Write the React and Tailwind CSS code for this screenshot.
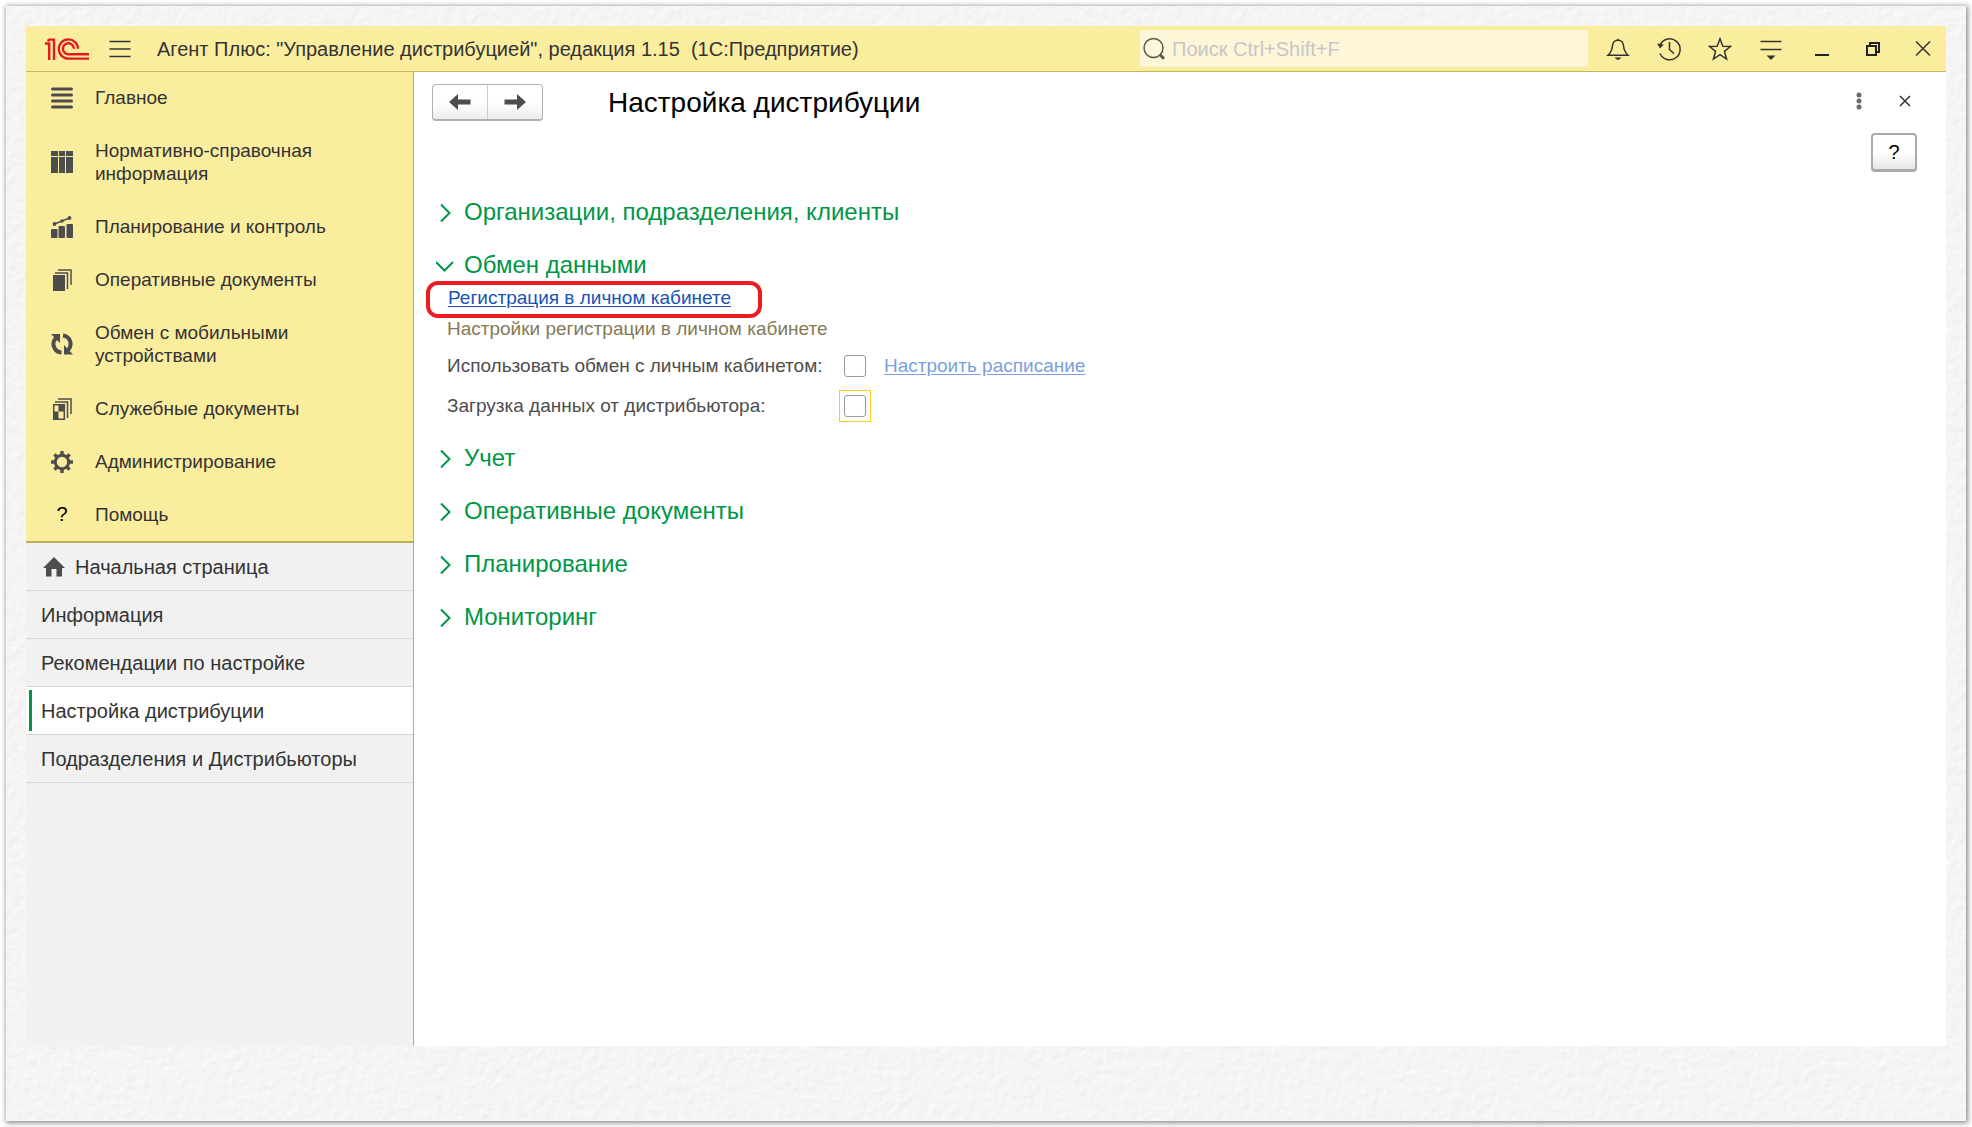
import React from "react";

const line = { fill: "none", stroke: "#333333", strokeWidth: 1.5 };

function Logo() {
  return (
    <svg viewBox="0 0 44 22" className="h-[22px] w-[44px] shrink-0" fill="none" stroke="#e01b22" strokeWidth="2.4" role="img" aria-label="1С">
      <path d="M0 5.5H4.2V22M3.2 1.6H9V22M2.6 3.2L4.4 1.4" />
      <path d="M33 10.8A9.6 9.6 0 1 0 23.4 20.6H44" />
      <path d="M28.9 10.8A5.5 5.5 0 1 0 23.4 16.3H44" />
    </svg>
  );
}

function Burger() {
  return (
    <svg viewBox="0 0 22 18" className="h-[18px] w-[22px]" {...line}>
      <path d="M.5 1.5H21.5M.5 9H21.5M.5 16.5H21.5" />
    </svg>
  );
}

function SearchIcon() {
  return (
    <svg viewBox="0 0 24 24" className="size-6 shrink-0" fill="none" stroke="#5c584a">
      <circle cx="10.5" cy="11" r="9.5" strokeWidth="1.5" />
      <path d="M17 17.800L21 21.800" strokeWidth="3" />
    </svg>
  );
}

const windowIcons = [
  {
    label: "Уведомления",
    art: (
      <svg viewBox="0 0 24 24" className="size-6" {...line}>
        <path d="M2 18.2H22C19.2 15.6 18 13.6 17.6 9.2C17.3 5.4 15.4 3.2 12 3.2C8.600 3.2 6.700 5.4 6.400 9.2C6 13.600 4.800 15.600 2 18.200Z" />
        <path d="M10.500 2.800A1.600 1.600 0 0 1 13.500 2.800ZM8.500 20.500H15.500L13 22.700H11Z" fill="#333" stroke="none" />
      </svg>
    ),
  },
  {
    label: "История",
    art: (
      <svg viewBox="0 0 24 24" className="size-6" {...line}>
        <path d="M3.300 7.500A10.500 10.500 0 1 1 3 16.500M12.500 5V12.500L17 16.800" />
        <path d="M0 6.500L6.800 7.500L3 11.500Z" fill="#333" stroke="none" />
      </svg>
    ),
  },
  {
    label: "Избранное",
    art: (
      <svg viewBox="0 0 24 24" className="size-6" {...line}>
        <path d="M12 1.800L14.800 9.300L22.500 9.500L16.400 14.300L18.600 22L12 17.600L5.400 22L7.600 14.300L1.500 9.500L9.200 9.300Z" />
      </svg>
    ),
  },
  {
    label: "Сервис и настройки",
    art: (
      <svg viewBox="0 0 24 24" className="size-6" {...line}>
        <path d="M1.500 4.500H22.500M1.500 12.500H22.500" />
        <path d="M7.500 18.500H16.500L12 23Z" fill="#333" stroke="none" />
      </svg>
    ),
  },
  {
    label: "Свернуть",
    art: (
      <svg viewBox="0 0 24 24" className="size-6">
        <path d="M5 17H19V19H5Z" fill="#222" />
      </svg>
    ),
  },
  {
    label: "Развернуть",
    art: (
      <svg viewBox="0 0 24 24" className="size-6" fill="none" stroke="#222" strokeWidth="2">
        <path d="M6 9H15V18H6ZM9 9V6H18V15H15" />
      </svg>
    ),
  },
  {
    label: "Закрыть приложение",
    art: (
      <svg viewBox="0 0 24 24" className="size-6" {...line}>
        <path d="M6 4.500L20 18.500M20 4.500L6 18.500" />
      </svg>
    ),
  },
];

const glyph = "size-[22px]";
const menu = [
  {
    label: "Главное",
    art: (
      <svg viewBox="0 0 22 22" className={glyph}>
        <path d="M1.500 2H20.500M1.500 8H20.500M1.500 14H20.500M1.500 20H20.500" stroke="#4d4d4d" strokeWidth="3" strokeLinecap="round" />
      </svg>
    ),
  },
  {
    label: "Нормативно-справочная информация",
    art: (
      <svg viewBox="0 0 22 22" className={glyph} fill="#4d4d4d">
        <path d="M0 0H7V5H0ZM8 0H14V5H8ZM15 0H22V5H15ZM0 6H7V22H0ZM8 6H14V22H8ZM15 6H22V22H15Z" />
      </svg>
    ),
  },
  {
    label: "Планирование и контроль",
    art: (
      <svg viewBox="0 0 22 22" className={glyph} fill="#4d4d4d">
        <rect x="0" y="13" width="6.500" height="9" rx="1" />
        <rect x="7.500" y="10" width="6.500" height="12" rx="1" />
        <rect x="15.500" y="8" width="6.500" height="14" rx="1" />
        <path d="M3.500 8L11 5L18.500 2" fill="none" stroke="#4d4d4d" strokeWidth="1.500" />
        <circle cx="3.500" cy="8" r="1.900" />
        <circle cx="11" cy="5" r="1.700" />
        <circle cx="18.500" cy="2" r="1.900" />
      </svg>
    ),
  },
  {
    label: "Оперативные документы",
    art: (
      <svg viewBox="0 0 22 22" className={glyph} fill="none" stroke="#4d4d4d" strokeWidth="1.500">
        <path d="M2 6H14V22H2Z" fill="#4d4d4d" stroke="none" />
        <path d="M4 4H16.500V20M7 .900H20V16" />
      </svg>
    ),
  },
  {
    label: "Обмен с мобильными устройствами",
    art: (
      <svg viewBox="0 0 22 22" className={glyph}>
        <path d="M10.500 19.500A8.500 8.500 0 0 1 5 5M12 2.500A8.500 8.500 0 0 1 17 17" fill="none" stroke="#4d4d4d" strokeWidth="4" />
        <path d="M0 1H9V10ZM22 21.500H13V12Z" fill="#4d4d4d" />
      </svg>
    ),
  },
  {
    label: "Служебные документы",
    art: (
      <svg viewBox="0 0 22 22" className={glyph} fill="none" stroke="#4d4d4d" strokeWidth="1.500">
        <path d="M2.700 6.700H13.300V21.300H2.700Z" />
        <path d="M7.500 6.500H13.500V13.500H7.500ZM2.500 13.500H7.500V21.500H2.500Z" fill="#4d4d4d" stroke="none" />
        <path d="M4 4H16.500V20M7 .900H20V16" />
      </svg>
    ),
  },
  {
    label: "Администрирование",
    art: (
      <svg viewBox="0 0 22 22" className={glyph} fill="none" stroke="#4d4d4d">
        <circle cx="11" cy="11" r="6.700" strokeWidth="3" />
        <path d="M11 0V4M11 18V22M0 11H4M18 11H22M3.400 3.400L6.200 6.200M15.800 15.800L18.600 18.600M3.400 18.600L6.200 15.800M15.800 6.200L18.600 3.400" strokeWidth="3.400" />
      </svg>
    ),
  },
  { label: "Помощь", art: <span className="text-xl leading-[23px] text-black">?</span> },
];

const tabs = ["Информация", "Рекомендации по настройке", "Настройка дистрибуции", "Подразделения и Дистрибьюторы"];

function Section({ title, open }) {
  return (
    <h2>
      <button type="button" aria-expanded={!!open} className="flex h-[53px] items-center gap-2 text-2xl text-[#009646]">
        <svg viewBox="0 0 20 20" className="size-5" fill="none" stroke="#009646" strokeWidth="2">
          {open ? <path d="M0 7L8.500 15.500L17 7" /> : <path d="M5 2.500L13.500 11L5 19.500" />}
        </svg>
        {title}
      </button>
    </h2>
  );
}

function Paper() {
  return (
    <svg aria-hidden="true" className="pointer-events-none absolute inset-0 size-full">
      <filter id="paper" x="0" y="0" width="100%" height="100%" colorInterpolationFilters="sRGB">
        <feTurbulence type="fractalNoise" baseFrequency="0.120" numOctaves="3" seed="4" result="n" />
        <feDiffuseLighting in="n" surfaceScale="0.180" diffuseConstant="1.110" lightingColor="#f6f5f3">
          <feDistantLight azimuth="235" elevation="64" />
        </feDiffuseLighting>
      </filter>
      <rect width="100%" height="100%" filter="url(#paper)" />
    </svg>
  );
}

const arrowButton = "flex flex-1 items-center justify-center";
const box = "block size-[22px] appearance-none rounded-[3px] border border-[#999] bg-white";

export default function App() {
  return (
    <div className="flex min-h-screen bg-[#fefefe] p-1.5 font-['Liberation_Sans',Arial,sans-serif] text-xl leading-6 text-[#333]">
      <div className="relative flex min-w-0 flex-1 flex-col bg-[#f5f4f2] px-5 pt-5 pb-[75px] shadow-[1px_1px_5px_1px_rgba(0,0,0,0.45)]">
        <Paper />
        <div className="relative flex flex-1 flex-col bg-white">
          <header className="flex h-[46px] items-center border-b border-[#c6b75e] bg-[#fbed9e] pl-[19px]">
            <Logo />
            <button type="button" aria-label="Главное меню" className="ml-5">
              <Burger />
            </button>
            <h1 className="ml-[26px] whitespace-pre">{'Агент Плюс: "Управление дистрибуцией", редакция 1.15  (1С:Предприятие)'}</h1>
            <label className="ml-auto flex h-[37px] w-[448px] items-center gap-[5px] rounded-[3px] bg-[#fdf6d8] pl-[3px]">
              <SearchIcon />
              <input
                type="search"
                aria-label="Поиск"
                placeholder="Поиск Ctrl+Shift+F"
                className="min-w-0 flex-1 bg-transparent outline-none placeholder:text-[#c6c6c6]"
              />
            </label>
            <div className="ml-1 flex">
              {windowIcons.map((i) => (
                <button key={i.label} type="button" aria-label={i.label} className="flex w-[51px] items-center justify-center last:w-12">
                  {i.art}
                </button>
              ))}
            </div>
          </header>

          <div className="flex flex-1">
            <aside className="flex w-[388px] shrink-0 flex-col border-r border-[#bdb05e] bg-[#f1f1f1]">
              <nav className="flex flex-col gap-[30px] border-b-2 border-[#bdae58] bg-[#fbed9e] pt-3.5 pb-[15px] text-[19px] leading-[23px]">
                {menu.map((m) => (
                  <a key={m.label} href="#" className="flex items-center gap-[22px] pl-[25px]">
                    <span className="flex w-[22px] shrink-0 justify-center">{m.art}</span>
                    <span className="w-60">{m.label}</span>
                  </a>
                ))}
              </nav>
              <nav className="flex flex-col">
                <a href="#" className="flex h-12 items-center gap-2.5 border-b border-[#d6d6d6] pl-[17px]">
                  <svg viewBox="0 0 22 20" className="h-5 w-[22px]" fill="#4d4d4d">
                    <path d="M11 0L22 11H19V19.500H13.500V12H8.500V19.500H3V11H0Z" />
                  </svg>
                  Начальная страница
                </a>
                {tabs.map((t) =>
                  t === "Настройка дистрибуции" ? (
                    <a key={t} href="#" aria-current="page" className="flex h-12 items-center border-b border-[#d6d6d6] bg-white pl-[3px]">
                      <span className="flex h-[41px] items-center border-l-3 border-[#009646] pl-[9px]">{t}</span>
                    </a>
                  ) : (
                    <a key={t} href="#" className="flex h-12 items-center border-b border-[#d6d6d6] pl-[15px]">
                      {t}
                    </a>
                  )
                )}
              </nav>
            </aside>

            <main className="min-w-0 flex-1 pt-3 pl-[18px]">
              <div className="flex h-[37px] items-center">
                <div className="flex h-[37px] w-[111px] divide-x divide-[#ccc] rounded-[4px] border border-b-2 border-[#b0b0b0] bg-linear-to-b from-white from-50% to-[#ececec]">
                  <button type="button" aria-label="Назад" className={arrowButton}>
                    <svg viewBox="0 0 22 16" className="h-4 w-[22px]" fill="#4d4d4d">
                      <path d="M0 8L9 0V5.500H21.500V10.500H9V16Z" />
                    </svg>
                  </button>
                  <button type="button" aria-label="Вперед" className={arrowButton}>
                    <svg viewBox="0 0 22 16" className="h-4 w-[22px]" fill="#4d4d4d">
                      <path d="M22 8L13 0V5.500H.500V10.500H13V16Z" />
                    </svg>
                  </button>
                </div>
                <h2 className="ml-[65px] text-[28px] leading-9 text-black">Настройка дистрибуции</h2>
                <div className="mr-[35px] ml-auto flex items-center gap-[37px] pb-1">
                  <button type="button" aria-label="Ещё">
                    <svg viewBox="0 0 6 18" className="h-[18px] w-1.5" fill="#6b6b6b">
                      <circle cx="3" cy="3" r="2.500" />
                      <circle cx="3" cy="9" r="2.500" />
                      <circle cx="3" cy="15" r="2.500" />
                    </svg>
                  </button>
                  <button type="button" aria-label="Закрыть">
                    <svg viewBox="0 0 12 12" className="size-3" {...line}>
                      <path d="M1 1L11 11M11 1L1 11" />
                    </svg>
                  </button>
                </div>
              </div>

              <div className="mt-3 mr-[29px] flex justify-end">
                <button
                  type="button"
                  aria-label="Справка"
                  className="h-[39px] w-[46px] rounded-[4px] border-2 border-b-3 border-[#aaa] bg-linear-to-b from-white from-50% to-[#e8e8e8] text-black"
                >
                  ?
                </button>
              </div>

              <div className="mt-[13px] pl-1">
                <Section title="Организации, подразделения, клиенты" />
                <Section title="Обмен данными" open />
                <div className="-mt-2.5 -ml-2.5 flex h-[37px] w-[336px] items-center rounded-xl border-4 border-[#ed1c1f] pb-1 pl-[18px] text-[19px]">
                  <a href="#" className="text-[#1a53b5] underline underline-offset-2">
                    Регистрация в личном кабинете
                  </a>
                </div>
                <div className="pl-[11px] text-[19px] text-[#4d4d4d]">
                  <p className="leading-[21px] text-[#857a56]">Настройки регистрации в личном кабинете</p>
                  <div className="mt-[7px] grid grid-cols-[392px_auto] items-center justify-start">
                    <label htmlFor="exchange" className="flex h-10 items-center whitespace-nowrap">
                      Использовать обмен с личным кабинетом:
                    </label>
                    <div className="flex items-center gap-[13px]">
                      <span className="p-[5px] pr-0">
                        <input id="exchange" type="checkbox" className={box} />
                      </span>
                      <a href="#" className="ml-[5px] text-[#7a9fdc] underline underline-offset-2">
                        Настроить расписание
                      </a>
                    </div>
                    <label htmlFor="import" className="flex h-10 items-center">
                      Загрузка данных от дистрибьютора:
                    </label>
                    <span className="justify-self-start border border-[#ffcb1f] p-1">
                      <input id="import" type="checkbox" className={box} />
                    </span>
                  </div>
                </div>
                <div className="mt-[5px]">
                  <Section title="Учет" />
                  <Section title="Оперативные документы" />
                  <Section title="Планирование" />
                  <Section title="Мониторинг" />
                </div>
              </div>
            </main>
          </div>
        </div>
      </div>
    </div>
  );
}
